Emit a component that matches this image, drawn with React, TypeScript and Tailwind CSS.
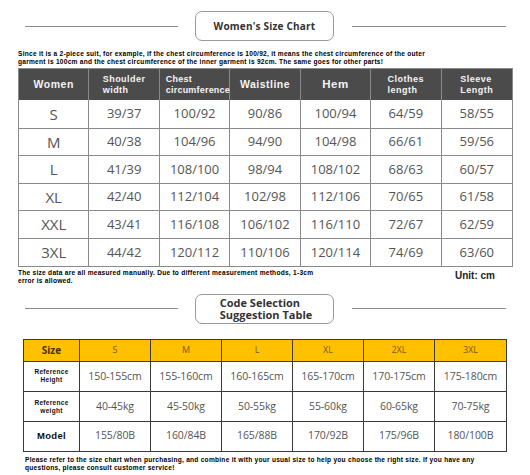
import React from 'react';

const sizes = [
  ['S', '39/37', '100/92', '90/86', '100/94', '64/59', '58/55'],
  ['M', '40/38', '104/96', '94/90', '104/98', '66/61', '59/56'],
  ['L', '41/39', '108/100', '98/94', '108/102', '68/63', '60/57'],
  ['XL', '42/40', '112/104', '102/98', '112/106', '70/65', '61/58'],
  ['XXL', '43/41', '116/108', '106/102', '116/110', '72/67', '62/59'],
  ['3XL', '44/42', '120/112', '110/106', '120/114', '74/69', '63/60'],
];

const codes = ['S', 'M', 'L', 'XL', '2XL', '3XL'];
const heights = ['150-155cm', '155-160cm', '160-165cm', '165-170cm', '170-175cm', '175-180cm'];
const weights = ['40-45kg', '45-50kg', '50-55kg', '55-60kg', '60-65kg', '70-75kg'];
const models = ['155/80B', '160/84B', '165/88B', '170/92B', '175/96B', '180/100B'];

function TitleRow({ children }: { children: React.ReactNode }) {
  return (
    <div className="flex items-center h-[30px]">
      <div className="ml-[25px] w-[153px] h-px bg-[#8c8c8c]" />
      <div className="ml-[17px] w-[139px] h-[30px] rounded-[7px] border-[1.5px] border-[#9a9a9a] flex items-center justify-center">
        {children}
      </div>
      <div className="ml-[18px] w-[154px] h-px bg-[#8c8c8c]" />
    </div>
  );
}

export default function App() {
  const note = "font-['Liberation_Sans',Arial,sans-serif] font-bold text-[6.6px] leading-[8px] text-black tracking-[0.25px] whitespace-nowrap";
  const head = "font-['Liberation_Sans',Arial,sans-serif] font-bold";

  return (
    <div className="w-[530px] h-[475px] bg-white overflow-hidden pt-[11px] font-['Open_Sans',sans-serif]">
      <TitleRow>
        <span className="text-[10px] font-bold text-[#333] tracking-[0.2px]">Women's Size Chart</span>
      </TitleRow>

      <p className={`${note} ml-[18px] mt-[9px]`}>
        Since it is a 2-piece suit, for example, if the chest circumference is 100/92, it means the chest circumference of the outer
        <br />
        garment is 100cm and the chest circumference of the inner garment is 92cm. The same goes for other parts!
      </p>

      {/* Women's size table */}
      <div className="ml-[18px] mt-[2px] w-[495px] border border-[#8a8a8a]">
        <div className={`${head} grid grid-cols-7 h-[31px] bg-[#4b4b4b] text-[#f4f4f4] text-[9px] leading-[11px] tracking-[0.5px]`}>
          <div className="flex items-center justify-center border-r border-[#8a8a8a] text-[10.5px]">Women</div>
          <div className="flex items-center justify-center border-r border-[#8a8a8a]"><span>Shoulder<br />width</span></div>
          <div className="flex items-center pl-[6px] border-r border-[#8a8a8a] tracking-[0.2px]"><span>Chest<br />circumference</span></div>
          <div className="flex items-center justify-center border-r border-[#8a8a8a] text-[10.5px]">Waistline</div>
          <div className="flex items-center justify-center border-r border-[#8a8a8a] text-[11.5px]">Hem</div>
          <div className="flex items-center justify-center border-r border-[#8a8a8a]"><span>Clothes<br />length</span></div>
          <div className="flex items-center justify-center"><span>Sleeve<br />Length</span></div>
        </div>
        {sizes.map((row, i) => (
          <div key={row[0]} className={`grid grid-cols-7 h-[27.6px] text-[#555] ${i > 0 ? 'border-t border-[#8a8a8a]' : ''}`}>
            {row.map((cell, j) => (
              <div
                key={j}
                className={`flex items-center justify-center ${j < 6 ? 'border-r border-[#8a8a8a]' : ''} ${j === 0 ? 'text-[15px]' : 'text-[13px]'}`}
              >
                {cell}
              </div>
            ))}
          </div>
        ))}
      </div>

      <div className="flex justify-between items-start ml-[18px] mt-[2px] w-[477px]">
        <p className={note}>
          The size data are all measured manually. Due to different measurement methods, 1-3cm
          <br />
          error is allowed.
        </p>
        <span className="font-['Liberation_Sans',Arial,sans-serif] font-bold text-[10px] leading-[12px] text-[#222] mt-[1px]">Unit: cm</span>
      </div>

      <div className="mt-[9px]">
        <TitleRow>
          <span className="text-[11px] leading-[12px] font-bold text-[#333] text-left pl-[3px]">
            Code Selection
            <br />
            Suggestion Table
          </span>
        </TitleRow>
      </div>

      {/* Code selection table */}
      <div className="ml-[23px] mt-[15px] w-[484px] border border-[#3a3a3a]">
        <div className="grid grid-cols-[56px_repeat(6,1fr)] h-[22px] bg-[#ffc000] border-b border-[#3a3a3a]">
          <div className="flex items-center justify-center border-r border-[#3a3a3a] font-bold text-[10px] text-[#4a3000]">Size</div>
          {codes.map((c, j) => (
            <div
              key={c}
              className={`flex items-center justify-center text-[9px] text-[#7a5a20] ${j < 5 ? 'border-r border-[#3a3a3a]' : ''}`}
            >
              {c}
            </div>
          ))}
        </div>
        {[
          { label: <>Reference<br />Height</>, vals: heights, small: true },
          { label: <>Reference<br />weight</>, vals: weights, small: true },
          { label: <>Model</>, vals: models, small: false },
        ].map((r, i) => (
          <div key={i} className={`grid grid-cols-[56px_repeat(6,1fr)] h-[29.7px] ${i > 0 ? 'border-t border-[#3a3a3a]' : ''}`}>
            <div
              className={`flex items-center justify-center text-center border-r border-[#3a3a3a] font-['Liberation_Sans',Arial,sans-serif] font-bold text-[#111] ${r.small ? 'text-[6.5px] leading-[8px] tracking-[0.3px]' : 'text-[9.5px] tracking-[0.3px]'}`}
            >
              <span>{r.label}</span>
            </div>
            {r.vals.map((v, j) => (
              <div
                key={j}
                className={`flex items-center justify-center text-[10.5px] tracking-[-0.1px] text-[#555] ${j < 5 ? 'border-r border-[#3a3a3a]' : ''}`}
              >
                {v}
              </div>
            ))}
          </div>
        ))}
      </div>

      <p className={`${note} ml-[25px] mt-[4px]`}>
        Please refer to the size chart when purchasing, and combine it with your usual size to help you choose the right size. If you have any
        <br />
        questions, please consult customer service!
      </p>
    </div>
  );
}
